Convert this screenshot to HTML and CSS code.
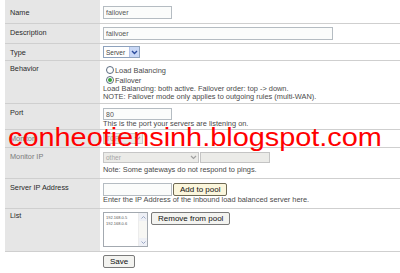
FILE: index.html
```html
<!DOCTYPE html>
<html lang="en">
<head>
    <meta charset="UTF-8">
    <title>Failover pool</title>
    <link rel="stylesheet" href="styles.css">
</head>
<body>
    <div class="form">
        <div class="row r-name">
            <div class="lbl">Name</div>
            <div class="val"><input class="txt w-short" type="text" value="failover"></div>
        </div>
        <div class="row r-desc">
            <div class="lbl">Description</div>
            <div class="val"><input class="txt w-long" type="text" value="failvoer"></div>
        </div>
        <div class="row r-type">
            <div class="lbl">Type</div>
            <div class="val">
                <span class="sel sel-type">Server<span class="sel-btn"><svg width="7" height="5" viewBox="0 0 7 5"><path d="M1 1 L3.5 3.5 L6 1" fill="none" stroke="#2b4c9c" stroke-width="1.4"/></svg></span></span>
            </div>
        </div>
        <div class="row r-behavior">
            <div class="lbl">Behavior</div>
            <div class="val">
                <div class="opt"><span class="radio"></span>Load Balancing</div>
                <div class="opt"><span class="radio on"></span>Failover</div>
                <div class="note">Load Balancing: both active. Failover order: top -&gt; down.<br>NOTE: Failover mode only applies to outgoing rules (multi-WAN).</div>
            </div>
        </div>
        <div class="row r-port">
            <div class="lbl">Port</div>
            <div class="val">
                <input class="txt w-short" type="text" value="80">
                <div class="note">This is the port your servers are listening on.</div>
            </div>
        </div>
        <div class="row r-monitor">
            <div class="lbl dim">Monitor</div>
            <div class="val">
                <span class="sel sel-off sel-mon">TCP<span class="sel-btn"><svg width="7" height="5" viewBox="0 0 7 5"><path d="M1 1 L3.5 3.5 L6 1" fill="none" stroke="#a0a0a0" stroke-width="1.2"/></svg></span></span>
            </div>
        </div>
        <div class="row r-monip">
            <div class="lbl dim">Monitor IP</div>
            <div class="val">
                <div class="line">
                    <span class="sel sel-off sel-ip">other<span class="sel-btn"><svg width="7" height="5" viewBox="0 0 7 5"><path d="M1 1 L3.5 3.5 L6 1" fill="none" stroke="#a0a0a0" stroke-width="1.2"/></svg></span></span>
                    <span class="txt-off"></span>
                </div>
                <div class="note">Note: Some gateways do not respond to pings.</div>
            </div>
        </div>
        <div class="row r-server">
            <div class="lbl">Server IP Address</div>
            <div class="val">
                <div class="line">
                    <input class="txt w-short" type="text" value="">
                    <button class="btn btn-add">Add to pool</button>
                </div>
                <div class="note">Enter the IP Address of the inbound load balanced server here.</div>
            </div>
        </div>
        <div class="row r-list">
            <div class="lbl">List</div>
            <div class="val">
                <div class="line line-top">
                    <div class="listbox">
                        <div class="items">
                            <div>192.168.0.5</div>
                            <div>192.168.0.6</div>
                        </div>
                        <div class="scroll">
                            <span class="arr"><svg width="5" height="3" viewBox="0 0 5 3"><path d="M0.5 2.5 L2.5 0.5 L4.5 2.5" fill="none" stroke="#9aa7c4" stroke-width="1"/></svg></span>
                            <span class="arr"><svg width="5" height="3" viewBox="0 0 5 3"><path d="M0.5 0.5 L2.5 2.5 L4.5 0.5" fill="none" stroke="#9aa7c4" stroke-width="1"/></svg></span>
                        </div>
                    </div>
                    <button class="btn">Remove from pool</button>
                </div>
            </div>
        </div>
        <div class="row r-save">
            <div class="lbl blank"></div>
            <div class="val"><button class="btn">Save</button></div>
        </div>
    </div>

    <div class="watermark">conheotiensinh.blogspot.com</div>
</body>
</html>
```

FILE: styles.css
```css
/* base */
* {
    margin: 0;
    padding: 0;
    box-sizing: border-box;
}

body {
    width: 400px;
    height: 273px;
    overflow: hidden;
    background: #ffffff;
    font-family: "Liberation Sans", Arial, sans-serif;
    font-size: 7.4px;
    color: #3a3a3a;
    position: relative;
}

/* form table */
.form {
    margin-left: 5px;
}

.row {
    display: grid;
    grid-template-columns: 95px 1fr;
    border-bottom: 1px solid #cfcfcf;
}

.lbl {
    background: #e6e6e6;
    padding: 3px 5px 0;
    line-height: 11px;
    font-size: 7.3px;
    color: #2a2a2a;
}

.lbl.dim {
    color: #7a7a7a;
}

.lbl.blank {
    background: #ffffff;
}

.val {
    padding: 3px;
}

.line {
    display: flex;
    align-items: center;
    gap: 1px;
}

.line-top {
    align-items: flex-start;
    gap: 3px;
}

.note {
    line-height: 8px;
    color: #4a4a4a;
    white-space: nowrap;
}

/* row spacing */
.r-name .val { padding-top: 6px; padding-bottom: 4px; }
.r-name .lbl { padding-top: 7px; }
.r-desc .val { padding-top: 3px; padding-bottom: 3px; }
.r-type .val { padding-top: 2px; padding-bottom: 2px; }
.r-behavior .val { padding-top: 4px; padding-bottom: 2px; }
.r-behavior .lbl { padding-top: 2px; }
.r-port .val { padding-top: 4px; padding-bottom: 1px; }
.r-monitor .val { padding-top: 3px; padding-bottom: 3px; }
.r-monip .val { padding-top: 4px; padding-bottom: 4px; }
.r-monip .note { margin-top: 3px; }
.r-server .val { padding-top: 4px; padding-bottom: 4px; }
.r-list .val { padding-top: 3px; padding-bottom: 4px; }
.r-list .lbl { padding-top: 1px; }
.r-save { border-bottom: none; }
.r-save .val { padding-top: 3px; }

/* text inputs */
.txt {
    display: block;
    height: 13px;
    border: 1px solid #b5bcc2;
    background: #fbfcfb;
    font-family: "Liberation Sans", Arial, sans-serif;
    font-size: 7px;
    color: #555555;
    padding: 0 2px;
    outline: none;
}

.r-port .txt { height: 12px; }

.w-short { width: 69px; }
.w-long { width: 230px; }

.txt-off {
    display: block;
    width: 70px;
    height: 11px;
    border: 1px solid #c4c4c4;
    background: #ebebe8;
}

/* selects */
.sel {
    display: flex;
    align-items: center;
    justify-content: space-between;
    height: 12px;
    border: 1px solid #8ea2bd;
    background: #ffffff;
    padding-left: 2px;
    font-size: 6.5px;
    color: #444444;
}

.sel-type { width: 37px; }
.sel-mon { width: 40px; height: 11px; }
.sel-ip { width: 96px; height: 11px; }

.sel-btn {
    display: flex;
    align-items: center;
    justify-content: center;
    width: 10px;
    height: 10px;
    background: #c9d8f6;
    border-left: 1px solid #b2c4ea;
}

.sel-off {
    background: #ebebe8;
    border-color: #c6c6c6;
    color: #a5a5a5;
}

.sel-off .sel-btn {
    height: 9px;
    background: #ebebe8;
    border-left: none;
}

/* radios */
.opt {
    display: flex;
    align-items: center;
    height: 10px;
    padding-left: 3px;
    color: #4a4a4a;
}

.radio {
    width: 8px;
    height: 8px;
    border: 1px solid #5a6b80;
    border-radius: 50%;
    background: #ffffff;
    margin-right: 1px;
    display: flex;
    align-items: center;
    justify-content: center;
}

.radio.on::after {
    content: "";
    width: 4px;
    height: 4px;
    border-radius: 50%;
    background: #3aa33a;
}

/* buttons */
.btn {
    height: 13px;
    padding: 0 6px;
    border: 1px solid #7a7a7a;
    border-radius: 2px;
    background: #f3f3f0;
    font-family: "Liberation Sans", Arial, sans-serif;
    font-size: 8px;
    color: #111111;
    line-height: 11px;
}

.btn-add {
    background: #fbf6dc;
    border-color: #6f6a55;
}

/* list box */
.listbox {
    display: flex;
    width: 45px;
    height: 35px;
    border: 1px solid #a3a9b0;
    background: #ffffff;
}

.items {
    flex: 1;
    padding: 2px 0 0 2px;
    font-size: 4px;
    line-height: 5.5px;
    color: #555555;
}

.scroll {
    width: 9px;
    display: flex;
    flex-direction: column;
    justify-content: space-between;
    background: #f7f7f4;
    border-left: 1px solid #ececec;
}

.arr {
    display: flex;
    align-items: center;
    justify-content: center;
    height: 8px;
    background: #eef0f6;
}

/* overlay text */
.watermark {
    position: absolute;
    left: 8px;
    top: 124px;
    font-family: "Liberation Sans", Arial, sans-serif;
    font-size: 26px;
    line-height: 26px;
    color: #ff0000;
    white-space: nowrap;
    transform: scaleX(1.11);
    transform-origin: left top;
}
```
